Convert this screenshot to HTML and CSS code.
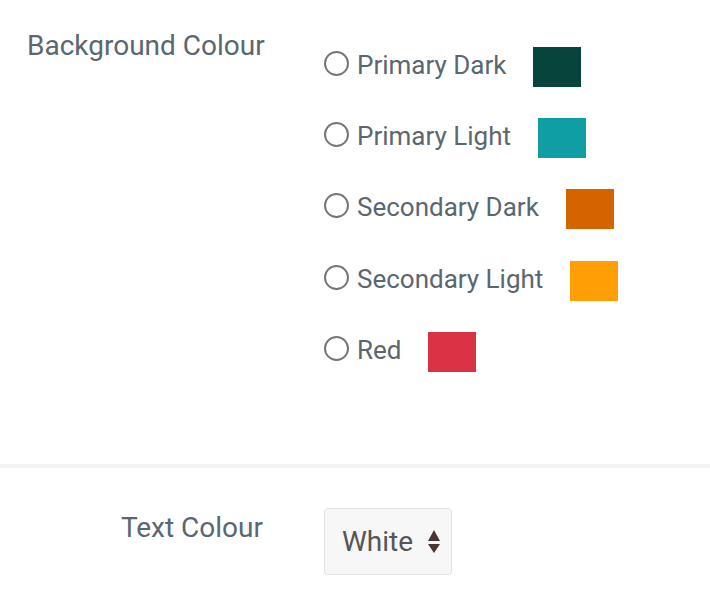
FILE: index.html
```html
<!DOCTYPE html>
<html>
<head>
<meta charset="utf-8">
<link rel="stylesheet" href="styles.css">
</head>
<body>
<div class="form">
  <section class="row row-bg">
    <div class="label label-left">Background Colour</div>
    <div class="options">
      <label class="option"><input type="radio" name="bg"><span class="opt-text">Primary Dark</span><span class="swatch sw-pd"></span></label>
      <label class="option"><input type="radio" name="bg"><span class="opt-text">Primary Light</span><span class="swatch sw-pl"></span></label>
      <label class="option"><input type="radio" name="bg"><span class="opt-text">Secondary Dark</span><span class="swatch sw-sd"></span></label>
      <label class="option"><input type="radio" name="bg"><span class="opt-text">Secondary Light</span><span class="swatch sw-sl"></span></label>
      <label class="option"><input type="radio" name="bg"><span class="opt-text">Red</span><span class="swatch sw-red"></span></label>
    </div>
  </section>
  <hr class="divider">
  <section class="row row-text">
    <div class="label label-text">Text Colour</div>
    <div class="select-wrap">
      <select class="select"><option>White</option><option>Black</option></select>
      <svg class="arrows" width="12" height="24" viewBox="0 0 12 24"><path d="M6 0 L12 11 L0 11 Z M0 14 L12 14 L6 23 Z" fill="#4b3434"/></svg>
    </div>
  </section>
</div>
</body>
</html>
```
FILE: styles.css
```css
html, body {
  margin: 0;
  padding: 0;
  background: #fff;
}
body {
  font-family: Roboto, "Liberation Sans", Arial, sans-serif;
  color: #5a6770;
  font-size: 26px;
  line-height: 36px;
}
.form {
  width: 710px;
}
.row {
  display: flex;
  align-items: flex-start;
}
.row-bg {
  padding-top: 28px;
  height: 464px;
  box-sizing: border-box;
}
.label {
  width: 263px;
  flex: none;
  text-align: right;
  margin-right: 61px;
  font-size: 28px;
  white-space: nowrap;
}
.label-left {
  text-align: left;
  padding-left: 27px;
  box-sizing: border-box;
}
.label-text {
  margin-top: 2px;
}
.options {
  display: flex;
  flex-direction: column;
  gap: 31px;
  padding-top: 19px;
}
.option {
  display: flex;
  align-items: flex-start;
  height: 40px;
}
.option:nth-child(4) { margin-top: 1px; }
.option input {
  appearance: none;
  -webkit-appearance: none;
  margin: 4px 8px 0 0;
  width: 25px;
  height: 25px;
  border: 2px solid #777;
  border-radius: 50%;
  box-sizing: border-box;
  background: #fff;
  flex: none;
}
.opt-text {
  line-height: 36px;
}
.swatch {
  display: block;
  width: 48px;
  height: 40px;
  margin-left: 27px;
  flex: none;
}
.sw-pd { background: #07443c; }
.sw-pl { background: #109ea5; }
.sw-sd { background: #d46300; }
.sw-sl { background: #ff9f05; }
.sw-red { background: #dc3245; }
.divider {
  margin: 0;
  border: 0;
  height: 4px;
  background: #f2f2f2;
}
.row-text {
  padding-top: 40px;
}
.select-wrap {
  position: relative;
  width: 128px;
  height: 67px;
}
.select {
  appearance: none;
  -webkit-appearance: none;
  width: 128px;
  height: 67px;
  box-sizing: border-box;
  border: 1.5px solid #e2e2e2;
  border-radius: 4px;
  background: #f7f7f7;
  color: #555;
  font-family: Roboto, "Liberation Sans", Arial, sans-serif;
  font-size: 28px;
  padding: 0 0 0 17px;
  margin: 0;
}
.arrows {
  position: absolute;
  left: 104px;
  top: 22px;
  pointer-events: none;
}
```
